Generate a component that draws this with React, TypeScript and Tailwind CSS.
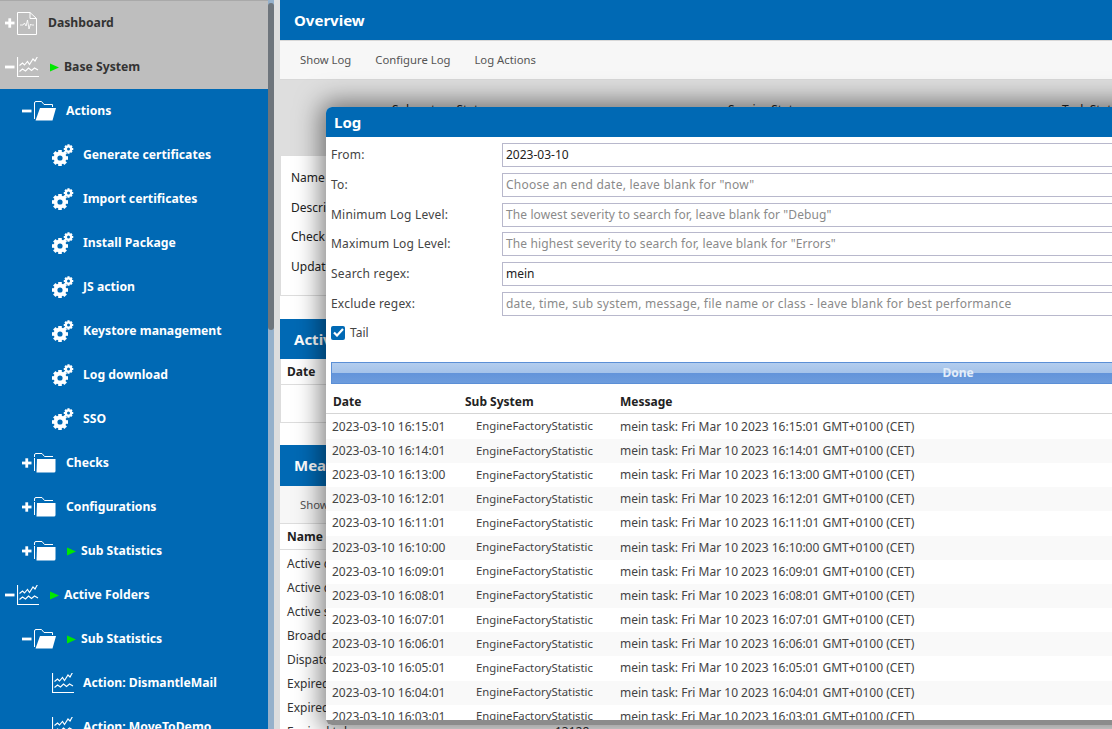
const font = { fontFamily: '"Noto Sans", sans-serif' }

function Plus({ open }: { open: boolean }) {
  return (
    <svg width="10" height="10" viewBox="0 0 10 10" className="shrink-0" fill="#fff">
      <rect x="0" y="3.6" width="9.5" height="2.8" />
      {!open && <rect x="3.35" y="0.3" width="2.8" height="9.4" />}
    </svg>
  )
}

function ChartIcon({ size = 22 }: { size?: number }) {
  return (
    <svg width={size} height={size - 2} viewBox="0 0 22 20" fill="none" stroke="#fff" strokeWidth="1.15" className="shrink-0">
      <path d="M.5 0v19.5H22" />
      <path d="M2.5 8.5l3-2.5 2 2 3-3.5 2 3 3.5-5.5 2 2 2.5-4.5" />
      <path d="M2.5 14.5l3-2.5 3 2 3-3 3 2.5 3-2.5 3.5 2" />
    </svg>
  )
}

function PulseIcon() {
  return (
    <svg width="20" height="23" viewBox="0 0 20 23" fill="none" stroke="#fff" strokeWidth="1" className="shrink-0">
      <path d="M.5.5h12.5l6.5 6v16H.5z" />
      <path d="M13 .5v6h6.5" />
      <path d="M3 13h3l1.5-2 1.5 3 1.5-6 1.5 9 1.5-5 1 1h2.5" strokeOpacity=".85" />
    </svg>
  )
}

function FolderIcon({ open }: { open: boolean }) {
  if (open) {
    return (
      <svg width="22" height="20" viewBox="0 0 22 20" fill="none" className="shrink-0">
        <path d="M.5 18V2A1.5 1.5 0 0 1 2 .5h5.5L10 3.5h8.5V6" stroke="#fff" />
        <path d="M6 7h16l-3.5 12.5H1.5z" fill="#fff" />
      </svg>
    )
  }
  return (
    <svg width="22" height="20" viewBox="0 0 22 20" fill="none" className="shrink-0">
      <path d="M.5 4V2A1.5 1.5 0 0 1 2 .5h6L10.5 3.5h8.5" stroke="#fff" />
      <path d="M.5 18V5" stroke="#fff" />
      <path d="M3 6h18.5v12A1.5 1.5 0 0 1 20 19.5H2.5z" fill="#fff" />
    </svg>
  )
}

function GearShape({ cx, cy, r, hole }: { cx: number; cy: number; r: number; hole: number }) {
  const teeth = [0, 45, 90, 135, 180, 225, 270, 315]
  return (
    <g>
      {teeth.map(a => (
        <rect key={a} x={cx - r * 0.28} y={cy - r * 1.25} width={r * 0.56} height={r * 0.7} fill="#fff" transform={`rotate(${a} ${cx} ${cy})`} />
      ))}
      <circle cx={cx} cy={cy} r={(r + hole) / 2} fill="none" stroke="#fff" strokeWidth={r - hole} />
    </g>
  )
}

function GearsIcon() {
  return (
    <svg width="22" height="22" viewBox="0 0 22 22" className="shrink-0">
      <GearShape cx={8} cy={14} r={6.4} hole={2.6} />
      <GearShape cx={16.5} cy={5} r={3.8} hole={1.5} />
    </svg>
  )
}

function Arrow() {
  return (
    <svg width="9" height="9" viewBox="0 0 9 9" className="shrink-0">
      <path d="M0 .5L9 4.5 0 8.5z" fill="#00e800" />
    </svg>
  )
}

type NavRow = {
  label: string
  level: 0 | 1 | 2
  icon: 'chart' | 'pulse' | 'open' | 'closed' | 'gears'
  toggle?: 'plus' | 'minus'
  arrow?: boolean
  active?: boolean
}

const nav: NavRow[] = [
  { label: 'Dashboard', level: 0, icon: 'pulse', toggle: 'plus', active: true },
  { label: 'Base System', level: 0, icon: 'chart', toggle: 'minus', arrow: true, active: true },
  { label: 'Actions', level: 1, icon: 'open', toggle: 'minus' },
  { label: 'Generate certificates', level: 2, icon: 'gears' },
  { label: 'Import certificates', level: 2, icon: 'gears' },
  { label: 'Install Package', level: 2, icon: 'gears' },
  { label: 'JS action', level: 2, icon: 'gears' },
  { label: 'Keystore management', level: 2, icon: 'gears' },
  { label: 'Log download', level: 2, icon: 'gears' },
  { label: 'SSO', level: 2, icon: 'gears' },
  { label: 'Checks', level: 1, icon: 'closed', toggle: 'plus' },
  { label: 'Configurations', level: 1, icon: 'closed', toggle: 'plus' },
  { label: 'Sub Statistics', level: 1, icon: 'closed', toggle: 'plus', arrow: true },
  { label: 'Active Folders', level: 0, icon: 'chart', toggle: 'minus', arrow: true },
  { label: 'Sub Statistics', level: 1, icon: 'open', toggle: 'minus', arrow: true },
  { label: 'Action: DismantleMail', level: 2, icon: 'chart' },
  { label: 'Action: MoveToDemo', level: 2, icon: 'chart' },
]

function NavItem({ row }: { row: NavRow }) {
  const indent = row.level === 0 ? 'pl-[5px]' : row.level === 1 ? 'pl-[22px]' : 'pl-[52px]'
  return (
    <div className={`flex h-[44px] shrink-0 items-center ${indent} ${row.active ? 'bg-[#bebebe] text-[#333]' : 'text-white'}`}>
      {row.toggle && <Plus open={row.toggle === 'minus'} />}
      <span className={row.toggle ? 'ml-[2px] flex' : 'flex'}>
        {row.icon === 'chart' && <ChartIcon />}
        {row.icon === 'pulse' && <PulseIcon />}
        {row.icon === 'open' && <FolderIcon open />}
        {row.icon === 'closed' && <FolderIcon open={false} />}
        {row.icon === 'gears' && <GearsIcon />}
      </span>
      {row.arrow && <span className="ml-[11px] flex"><Arrow /></span>}
      <span className={`text-[12.2px] font-bold whitespace-nowrap ${row.arrow ? 'ml-[5px]' : row.level === 0 ? 'ml-[11px]' : row.level === 1 ? 'ml-[10px]' : 'ml-[9px]'}`}>
        {row.label}
      </span>
    </div>
  )
}

const formRows = [
  { label: 'From:', value: '2023-03-10' },
  { label: 'To:', placeholder: 'Choose an end date, leave blank for "now"', track: 'tracking-[0.24px]' },
  { label: 'Minimum Log Level:', placeholder: 'The lowest severity to search for, leave blank for "Debug"', track: 'tracking-[0.1px]' },
  { label: 'Maximum Log Level:', placeholder: 'The highest severity to search for, leave blank for "Errors"', track: 'tracking-[0.13px]' },
  { label: 'Search regex:', value: 'mein' },
  { label: 'Exclude regex:', placeholder: 'date, time, sub system, message, file name or class - leave blank for best performance', track: 'tracking-[0.24px]' },
]

const logTimes = ['16:15:01', '16:14:01', '16:13:00', '16:12:01', '16:11:01', '16:10:00', '16:09:01', '16:08:01', '16:07:01', '16:06:01', '16:05:01', '16:04:01', '16:03:01']

function LogDialog() {
  return (
    <div className="absolute top-[107px] left-[326px] flex h-[618px] w-[860px] flex-col overflow-hidden rounded-l-[6px] bg-white text-[12px] text-[#444] shadow-[0_0_26px_5px_rgba(0,0,0,0.5)]">
      <div className="flex h-[30px] shrink-0 items-center bg-[#0069b4] pl-[8px] text-[15px] font-bold text-white">Log</div>
      <div className="flex flex-col pt-[6px]">
        {formRows.map(r => (
          <div key={r.label} className="flex h-[29.8px] shrink-0 pl-[5px]">
            <span className="flex h-[24px] w-[171px] shrink-0 items-center tracking-[0.2px]">{r.label}</span>
            <div className={`flex h-[24px] flex-1 items-center border border-[#b8b8cc] pl-[3px] ${r.value ? 'text-[#222]' : 'text-[#8a8a8a]'} ${r.track ?? ''}`}>
              {r.value ?? r.placeholder}
            </div>
          </div>
        ))}
      </div>
      <div className="mt-[1px] flex h-[20px] shrink-0 items-center pl-[5px]">
        <span className="flex h-[14px] w-[14px] items-center justify-center rounded-[2px] bg-[#0069b4]">
          <svg width="11" height="9" viewBox="0 0 11 9" fill="none" stroke="#fff" strokeWidth="2.2"><path d="M1 4.5l3 3L10 1" /></svg>
        </span>
        <span className="ml-[5px]">Tail</span>
      </div>
      <div className="mt-[19px] ml-[5px] flex h-[22px] shrink-0 items-center justify-center border border-[#5b8fd6] bg-[linear-gradient(#b3cdee_0%,#a5c3ea_48%,#6394da_52%,#6d9cdd_100%)] pl-[399px] font-bold text-[#e3edf9]">
        Done
      </div>
      <div className="flex h-[30px] shrink-0 items-center border-b border-[#d5d5d5] pt-[8px] pl-[7px] font-bold text-[#222]">
        <span className="w-[132px]">Date</span>
        <span className="w-[155px]">Sub System</span>
        <span>Message</span>
      </div>
      <div className="flex min-h-0 flex-1 flex-col overflow-hidden pt-[1px]">
        {logTimes.map((t, i) => (
          <div key={t} className={`flex h-[24.17px] shrink-0 items-center pl-[6px] ${i % 2 ? 'bg-[#f9f9f9]' : 'bg-white'}`}>
            <span className="w-[144px]">2023-03-10 {t}</span>
            <span className="w-[144px] text-[11.3px]">EngineFactoryStatistic</span>
            <span>mein task: Fri Mar 10 2023 {t} GMT+0100 (CET)</span>
          </div>
        ))}
      </div>
      <div className="h-[5px] shrink-0 bg-[#8c8c8c]" />
    </div>
  )
}

export default function App() {
  return (
    <div style={font} className="relative flex h-[729px] w-[1112px] overflow-hidden bg-[#dedede] text-[12px] text-[#333]">
      <div className="flex h-full w-[268px] shrink-0 flex-col overflow-hidden bg-[#0069b4]">
        <div className="h-[1px] shrink-0 bg-[#a9a9a9]" />
        {nav.map((row, i) => (
          <NavItem key={i} row={row} />
        ))}
      </div>
      <div className="flex h-full w-[6px] shrink-0 flex-col bg-[#96b1cb] pt-[3px]">
        <div className="h-[327px] w-full rounded-[3px] bg-[#6e757c]" />
      </div>
      <div className="ml-[6px] flex h-full min-w-0 flex-1 flex-col">
        <div className="flex h-[40px] shrink-0 items-center bg-[#0069b4] pl-[14px] text-[15px] font-bold text-white">Overview</div>
        <div className="flex h-[40px] shrink-0 items-center gap-[24px] border-y border-[#d8d8d8] bg-[#f7f7f7] pl-[20px] text-[11.3px] text-[#555]">
          <span>Show Log</span>
          <span>Configure Log</span>
          <span>Log Actions</span>
        </div>
        <div className="flex h-[75px] shrink-0 pt-[21px] pl-[112px] text-[#222]">
          <span className="w-[336px] shrink-0">Subsystem Status</span>
          <span className="w-[334px] shrink-0">Service Status</span>
          <span className="shrink-0">Task Status</span>
        </div>
        <div className="flex h-[141px] shrink-0 flex-col border border-[#ddd] bg-white pt-[7px] pl-[10px] text-[#222]">
          <span className="flex h-[29.7px] items-center">Name</span>
          <span className="flex h-[29.7px] items-center">Description</span>
          <span className="flex h-[29.7px] items-center">Check</span>
          <span className="flex h-[29.7px] items-center">Updated</span>
        </div>
        <div className="h-[23px] shrink-0 bg-white" />
        <div className="flex h-[40px] shrink-0 items-center bg-[#0069b4] pl-[14px] text-[15px] font-bold text-white">Active</div>
        <div className="flex h-[26px] shrink-0 items-center border-x border-b border-[#ddd] bg-white pt-[1px] pl-[6px] font-bold text-[#222]">Date</div>
        <div className="h-[38px] shrink-0 border-x border-b border-[#ddd] bg-white" />
        <div className="h-[22px] shrink-0 bg-white" />
        <div className="flex h-[41px] shrink-0 items-center bg-[#0069b4] pl-[14px] text-[15px] font-bold text-white">Measurements</div>
        <div className="flex h-[38px] shrink-0 items-center border-b border-[#ddd] bg-[#f7f7f7] pt-[1px] pl-[20px] text-[11.3px] text-[#555]">Show</div>
        <div className="flex h-[26px] shrink-0 items-center border-b border-[#ddd] bg-white pt-[1px] pl-[7px] font-bold text-[#222]">Name</div>
        <div className="flex flex-1 flex-col overflow-hidden bg-white pt-[1.5px] pl-[7px] text-[#333]">
          {['Active connections', 'Active domains', 'Active sessions', 'Broadcasts', 'Dispatched', 'Expired keys', 'Expired sessions'].map(n => (
            <span key={n} className="flex h-[24.1px] shrink-0 items-center">{n}</span>
          ))}
          <div className="flex h-[24.1px] shrink-0 items-center">
            <span className="w-[268px]">Expired tokens</span>
            <span>13128</span>
          </div>
        </div>
      </div>
      <LogDialog />
    </div>
  )
}
